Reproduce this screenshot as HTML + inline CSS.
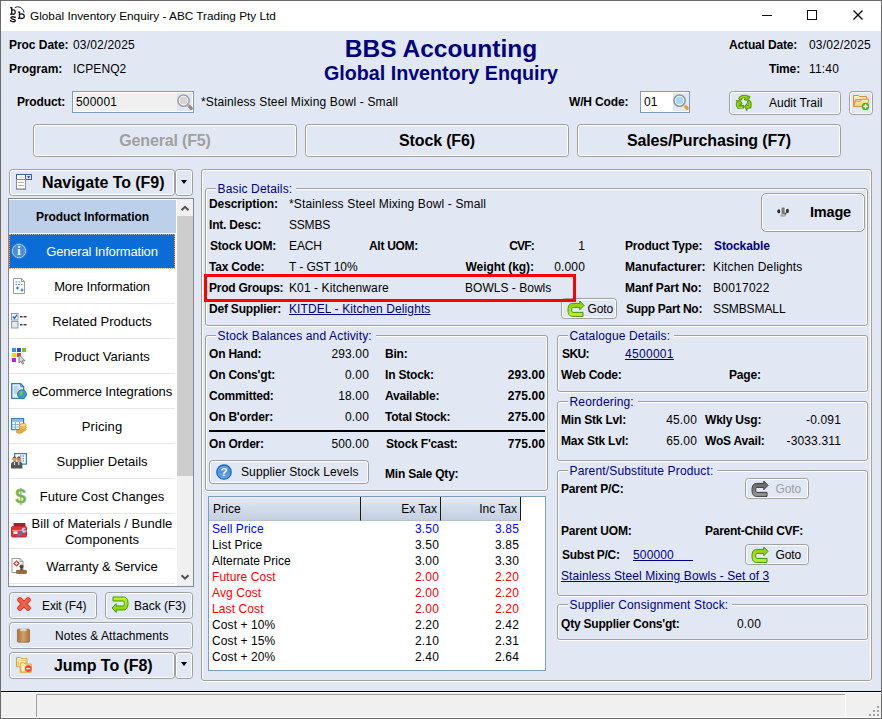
<!DOCTYPE html>
<html><head><meta charset="utf-8"><title>Global Inventory Enquiry</title>
<style>
*{box-sizing:border-box;margin:0;padding:0}
html,body{width:882px;height:719px;overflow:hidden;background:#e1e8f3}
body{font-family:"Liberation Sans",sans-serif;font-size:12px;color:#000;position:relative}
.a{position:absolute;white-space:nowrap;line-height:14px}
.b{font-weight:bold}
.r{text-align:right}
.c{text-align:center}
.navy{color:#000080}
.lnk{color:#000080;text-decoration:underline}
.btn{position:absolute;border:1px solid #a0a0a0;border-radius:3.500px;background:#e1e8f3;box-shadow:inset 0 0 0 1px #fdfdfe}
.grp{position:absolute;border:1px solid #a0a0a0;border-radius:3px;box-shadow:inset 1px 1px 0 #fff,inset -1px 0 0 #fff,0 1px 0 #fff}
.grp>span{position:absolute;top:-7px;left:10px;background:#e1e8f3;padding:0 4px 0 1.500px;color:#000080;font-size:12px;line-height:14px;white-space:nowrap;letter-spacing:.15px}
.li{position:absolute;left:0;width:166px;height:35px;border-bottom:1px solid #e6e6e6;background:#fff;text-align:center;font-size:13px;line-height:36px;white-space:nowrap;padding-left:20px}
svg{position:absolute;overflow:visible}
</style></head><body>
<div class="a" style="left:1px;top:1px;width:880px;height:30px;background:#fff"></div>
<svg width="0" height="0" style="left:0;top:0"><defs><linearGradient id="gg" x1="0" y1="0" x2="0" y2="1"><stop offset="0" stop-color="#c4ee36"/><stop offset="1" stop-color="#86cc00"/></linearGradient><linearGradient id="gy" x1="0" y1="0" x2="0" y2="1"><stop offset="0" stop-color="#fff6cc"/><stop offset="1" stop-color="#f3c95e"/></linearGradient><linearGradient id="gd" x1="0" y1="0" x2="0" y2="1"><stop offset="0" stop-color="#9a9a9a"/><stop offset="1" stop-color="#5e5e5e"/></linearGradient><linearGradient id="gb" x1="0" y1="0" x2="0" y2="1"><stop offset="0" stop-color="#3b80d4"/><stop offset="1" stop-color="#6aa8e8"/></linearGradient><linearGradient id="gc" x1="0" y1="0" x2="1" y2="0"><stop offset="0" stop-color="#a8733c"/><stop offset=".5" stop-color="#cf9f66"/><stop offset="1" stop-color="#a8733c"/></linearGradient></defs></svg>
<svg style="left:0px;top:0px" width="30" height="26" viewBox="0 0 30 26"><g fill="none" stroke="#1c1c1c" stroke-width="1.400" stroke-linecap="butt"><path d="M10.200 7.600h1.500v6.600M10.200 14.200h1.500M11.700 10.600c1.300-1.300 3.500-.9 3.500 1.400s-2.200 2.900-3.500 1.500"/><path d="M15.100 16.500v1.500M15 17.900c-.5-1.500-4-1.700-4.100 0-.1 1.700 4.400 .9 4.400 2.700 0 1.700-4 1.600-4.600-.2M10.700 19.900v1.700"/><path d="M18 12.100h1.500v6.300M18 18.300h1.500M19.500 14.700c1.400-1.400 4.800-1 4.800 1.500s-3.400 2.900-4.800 1.500"/><path d="M14.800 7.700c3.300-2.200 8.200-.3 9.300 4.900" stroke-width="1"/></g></svg>
<div class="a " style="left:30px;top:8px;letter-spacing:0px;font-size:11.8px;line-height:16px;color:#000">Global Inventory Enquiry - ABC Trading Pty Ltd</div>
<svg style="left:760px;top:9px" width="110" height="14" viewBox="0 0 110 14"><g fill="none" stroke="#111" stroke-width="1"><path d="M2 6.500h10"/><rect x="47.500" y="1.500" width="9" height="9"/><path d="M93.500 1.500l9 9M102.500 1.500l-9 9" stroke-width="1.250" stroke="#000"/></g></svg>
<div class="a b" style="left:9px;top:38px;letter-spacing:-0.05px;">Proc Date:</div>
<div class="a " style="left:73px;top:38px;letter-spacing:0.18px;">03/02/2025</div>
<div class="a b" style="left:9px;top:62px;letter-spacing:0px;">Program:</div>
<div class="a " style="left:73px;top:62px;letter-spacing:0.1px;">ICPENQ2</div>
<div class="a b navy c" style="left:241px;width:400px;top:35px;font-size:24.500px;line-height:28px">BBS Accounting</div>
<div class="a b navy c" style="left:241px;width:400px;top:61px;font-size:19.700px;line-height:24px">Global Inventory Enquiry</div>
<div class="a b" style="left:729px;top:38px;letter-spacing:-0.15px;">Actual Date:</div>
<div class="a " style="left:809px;top:38px;letter-spacing:0.18px;">03/02/2025</div>
<div class="a r b" style="left:700px;width:100px;top:62px;letter-spacing:-0.15px;">Time:</div>
<div class="a " style="left:809px;top:62px;letter-spacing:0.18px;">11:40</div>
<div class="a b" style="left:17px;top:95px;letter-spacing:-0.15px;">Product:</div>
<div class="a" style="left:72px;top:91px;width:122px;height:22px;border:1px solid #7f9db9;background:#f0f0f0;box-shadow:inset 0 0 0 1px #fff"></div>
<div class="a" style="left:177px;top:93px;width:15px;height:18px;background:#dfe7f3"></div>
<svg style="left:177px;top:93px" width="16" height="18" viewBox="0 0 16 18"><path d="M11.200 12.300l3 3" stroke="#b8b8b8" stroke-width="3.200" stroke-linecap="round"/><path d="M12.800 13.900l1.400 1.400" stroke="#8e8e8e" stroke-width="3.200" stroke-linecap="round"/><circle cx="6.500" cy="7.600" r="5.600" fill="#fff" stroke="#a2a2a2" stroke-width="1.600"/><circle cx="6.500" cy="7.600" r="4" fill="#d4d4d4"/></svg>
<div class="a " style="left:76px;top:95px;letter-spacing:0.2px;">500001</div>
<div class="a " style="left:201px;top:95px;letter-spacing:0.14px;">*Stainless Steel Mixing Bowl - Small</div>
<div class="a b" style="left:569px;top:95px;letter-spacing:-0.15px;">W/H Code:</div>
<div class="a" style="left:640px;top:91px;width:50px;height:22px;border:1px solid #7f9db9;background:#fff"></div>
<div class="a" style="left:673px;top:93px;width:16px;height:18px;background:#e1e8f3"></div>
<svg style="left:673px;top:93px" width="16" height="18" viewBox="0 0 16 18"><path d="M11.200 12.300l3 3" stroke="#d9dde2" stroke-width="3.200" stroke-linecap="round"/><path d="M12.800 13.900l1.400 1.400" stroke="#eb9f1e" stroke-width="3.200" stroke-linecap="round"/><circle cx="6.500" cy="7.600" r="5.600" fill="#fff" stroke="#979797" stroke-width="1.600"/><circle cx="6.500" cy="7.600" r="4" fill="#a4d8f6"/></svg>
<div class="a " style="left:644px;top:95px;letter-spacing:0.2px;">01</div>
<div class="btn" style="left:729px;top:91px;width:112px;height:24px;"></div>
<svg style="left:735.5px;top:94.5px" width="16" height="16" viewBox="0 0 16 16"><polygon points="2.700,4 3.600,1.800 6.100,.4 10.500,.4 10.800,.7 13.900,1.400 13.900,2 12.300,4.700 11.900,5.100 8.700,5.100 8.300,4 9.400,3.100 7.900,2.500 6.100,3.100 5.800,4.700 5,5.100" fill="#86c400" stroke="#3f8f00" stroke-width=".9" stroke-linejoin="round"/><polygon points="0.160,5.600 4.680,5.780 5.040,7.230 6.130,8.310 5.760,9.210 4.680,9.030 3.230,10.480 7.930,10.480 7.930,13 3.230,13.200 1.790,13.370 0.340,10.480 0.340,7.590 0.890,6.500" fill="#86c400" stroke="#3f8f00" stroke-width=".9" stroke-linejoin="round"/><polygon points="11.550,6.140 13.350,5.060 14.980,6.860 15.160,10.480 14.800,13 11.190,13.190 10.820,15.720 9.200,12.290 9.020,11.560 10.640,8.670 11,10.480 13.720,10.120 13.900,9.400 12.270,9.030 11.370,7.590" fill="#86c400" stroke="#3f8f00" stroke-width=".9" stroke-linejoin="round"/><path d="M4.500 3c1.500-1.600 4.500-1.800 6.500-.8M1.800 8v3.500l1 1h3.500M13.500 7.500l.3 3.500-1 .8h-2.300" fill="none" stroke="#b4e828" stroke-width="1" opacity=".85"/></svg>
<div class="a " style="left:769px;top:96px;letter-spacing:0px;">Audit Trail</div>
<div class="btn" style="left:849px;top:91px;width:24px;height:24px;"></div>
<svg style="left:853px;top:95px" width="17" height="16" viewBox="0 0 17 16"><path d="M.5 .5h5l.8 1h7.200l.5 3h-11.500l-2 7z" fill="url(#gy)" stroke="#d8933a" stroke-width="1" stroke-linejoin="round"/><path d="M2.500 6.200h5l1.600-2h6.500v1.600l-1.700 5.800h-13.400z" fill="url(#gy)" stroke="#d8933a" stroke-width="1" stroke-linejoin="round"/><circle cx="12.500" cy="11.400" r="3.600" fill="#3fa510"/><circle cx="12.500" cy="11.400" r="3.100" fill="#5cbc22"/><path d="M10.400 11.400h4.200M12.500 9.300v4.200" stroke="#fff" stroke-width="1.400"/></svg>
<div class="btn" style="left:33px;top:124px;width:264px;height:33px;"></div>
<div class="a b c" style="left:33px;top:132px;width:264px;font-size:16px;line-height:18px;color:#a0a0a0;letter-spacing:-.15px">General (F5)</div>
<div class="btn" style="left:305px;top:124px;width:264px;height:33px;"></div>
<div class="a b c" style="left:305px;top:132px;width:264px;font-size:16px;line-height:18px;color:#000;letter-spacing:-.15px">Stock (F6)</div>
<div class="btn" style="left:577px;top:124px;width:264px;height:33px;"></div>
<div class="a b c" style="left:577px;top:132px;width:264px;font-size:16px;line-height:18px;color:#000;letter-spacing:-.15px">Sales/Purchasing (F7)</div>
<div class="btn" style="left:9px;top:169px;width:166px;height:27px;"></div>
<svg style="left:16px;top:174px" width="16" height="16" viewBox="0 0 16 16"><rect x=".5" y=".5" width="15" height="5" fill="#fff" stroke="#3d5f91" stroke-width="1"/><path d="M9.500 .5v5" stroke="#3d5f91" stroke-width="1"/><rect x="10" y="1" width="5" height="4" fill="#dbe9f8"/><path d="M10.800 2.200h3.600l-1.800 2z" fill="#1d3f78"/><path d="M2.500 3h5" stroke="#e0e0e0" stroke-width="1.400"/><rect x=".5" y="5.500" width="9" height="9.500" fill="#fff" stroke="#8f8f8f" stroke-width="1"/><path d="M.3 15.300h9.600" stroke="#8a8a8a" stroke-width="1"/><path d="M2.200 8.500h5.600M2.200 11.500h5.600" stroke="#b0b0b0" stroke-width="1"/></svg>
<div class="a b" style="left:42px;top:174px;letter-spacing:-0.05px;font-size:16px;line-height:18px">Navigate To (F9)</div>
<div class="btn" style="left:175px;top:169px;width:18px;height:27px;"></div>
<div class="a" style="left:180.5px;top:180px;width:0px;height:0px;border:3.500px solid transparent;border-top:4px solid #000;border-bottom:0"></div>
<div class="a" id="list" style="left:8px;top:198px;width:186px;height:389px;border:1px solid #828790;background:#fff;overflow:hidden">
 <div class="a" style="left:0;top:1px;width:167px;height:33px;background:#bdd0e9"></div>
 <div class="a b c" style="left:0;top:11px;width:167px;font-size:12px;line-height:15px;letter-spacing:-.1px">Product Information</div>
 <div class="li" style="top:35px;background:#0a6cd6;color:#fff;outline:1px dotted #e0a878;outline-offset:-1px;letter-spacing:-0.18px">General Information</div>
 <svg style="left:2px;top:44px" width="16" height="16" viewBox="0 0 16 16"><circle cx="8" cy="8" r="6.800" fill="#4a8fdc" stroke="#b4d0f0" stroke-width="1"/><circle cx="8" cy="8" r="7.700" fill="none" stroke="#4a86c8" stroke-width=".5"/><text x="8" y="12.300" text-anchor="middle" style="font-family:'Liberation Serif',serif;font-weight:bold;font-size:12px" fill="#fff">i</text></svg>
 <div class="li" style="top:70px;letter-spacing:-0.16px">More Information</div>
 <svg style="left:2px;top:79px" width="16" height="16" viewBox="0 0 16 16"><path d="M2.500 .5h8l3 3v12h-11z" fill="#fff" stroke="#9a9a9a" stroke-width="1"/><path d="M10.500 .5v3h3" fill="none" stroke="#9a9a9a" stroke-width="1"/><path d="M4.500 4h2M7.500 4h1.500M4.500 6.500h1.500M7 6.500h2M10 6.500h1.500" stroke="#5b88c8" stroke-width="1"/><path d="M5 10h3M6.500 8.500v3M9.500 12h3M11 10.500v3" stroke="#2f6fd0" stroke-width="1.200"/></svg>
 <div class="li" style="top:105px;letter-spacing:0px">Related Products</div>
 <svg style="left:2px;top:114px" width="16" height="16" viewBox="0 0 16 16"><rect x=".5" y=".5" width="6.500" height="6.500" fill="#f2f6fb" stroke="#8e9aa8" stroke-width="1"/><path d="M1.800 3.600l1.600 1.700 2.500-3.400" fill="none" stroke="#2a62c8" stroke-width="1.400"/><rect x=".5" y="8.500" width="6.500" height="6.500" fill="#e4e9f0" stroke="#8e9aa8" stroke-width="1"/><path d="M9 3.800h2.600M12.600 3.800h3M9 11.800h2.600M12.600 11.800h3" stroke="#444" stroke-width="1.500"/></svg>
 <div class="li" style="top:140px;letter-spacing:0.03px">Product Variants</div>
 <svg style="left:2px;top:149px" width="16" height="16" viewBox="0 0 16 16"><rect x="1" y="0" width="4" height="4" fill="#3b8be8"/><rect x="6" y="0" width="4" height="4" fill="#2c44d8"/><rect x="11" y="0" width="4" height="4" fill="#7cc21e"/><rect x="1" y="5" width="4" height="4" fill="#f2d21c"/><rect x="6" y="5" width="4" height="4" fill="#e43a24"/><rect x="1" y="10" width="4" height="4" fill="#b822d8"/><path d="M8 6.500v8.500l2-1.800 1.500 3 1.300-.6-1.500-2.900h2.700z" fill="#d8d8d8" stroke="#666" stroke-width=".8"/></svg>
 <div class="li" style="top:175px;letter-spacing:-0.1px">eCommerce Integrations</div>
 <svg style="left:2px;top:184px" width="16" height="16" viewBox="0 0 16 16"><path d="M.7 .7h9l3 3v11.600h-12z" fill="#e8f2fb" stroke="#2f7fc0" stroke-width="1.300"/><path d="M9.700 .7v3h3" fill="none" stroke="#2f7fc0" stroke-width="1"/><rect x="2.500" y="3" width="5" height="8" fill="#b8d6f0"/><circle cx="11" cy="11.300" r="4.500" fill="#3a9ad8" stroke="#1f6fb0" stroke-width=".8"/><path d="M8 10c1-2 3-2.500 4.500-1.500 0 1.500-1 2-1.500 3.500s-1.500 1.500-2 0z" fill="#6fc83a"/></svg>
 <div class="li" style="top:210px;letter-spacing:0.1px">Pricing</div>
 <svg style="left:2px;top:219px" width="16" height="16" viewBox="0 0 16 16"><rect x=".6" y=".6" width="12" height="11" fill="#fff" stroke="#2f7fc0" stroke-width="1.200"/><rect x="1.200" y="1.200" width="10.800" height="2.600" fill="#7fb4e6"/><path d="M1 6.500h11M1 9h11M4.500 4v7.500M8.500 4v7.500" stroke="#7fb4e6" stroke-width="1"/><ellipse cx="8.500" cy="13.500" rx="3.300" ry="1.800" fill="#f3b23a" stroke="#d08c1a" stroke-width=".7"/><ellipse cx="12" cy="11.500" rx="3.300" ry="1.800" fill="#f6c04e" stroke="#d08c1a" stroke-width=".7"/><ellipse cx="12" cy="9.300" rx="3.300" ry="1.800" fill="#f9cf6a" stroke="#d08c1a" stroke-width=".7"/><ellipse cx="12" cy="7.200" rx="3.300" ry="1.800" fill="#fbdc8a" stroke="#d08c1a" stroke-width=".7"/></svg>
 <div class="li" style="top:245px;letter-spacing:0px">Supplier Details</div>
 <svg style="left:2px;top:254px" width="16" height="16" viewBox="0 0 16 16"><rect x="3.600" y=".6" width="11.800" height="10.500" fill="#fff" stroke="#2f7fc0" stroke-width="1.200"/><path d="M9 3h1.500M11.500 3h1.500M9 5.500h1.500M11.500 5.500h1.500M9 8h1.500M11.500 8h1.500" stroke="#5b9be0" stroke-width="1.300"/><circle cx="3.500" cy="6" r="2.300" fill="#d89a62"/><circle cx="7.800" cy="6" r="2.300" fill="#c98a52"/><path d="M2 4.800c.5-1.800 2.600-1.800 3.100 0zM6.300 4.800c.5-1.800 2.600-1.800 3.100 0z" fill="#5a3a20"/><path d="M0 15.500v-4c0-2 1.600-3 3.500-3s2.200.6 2.200.6.500-.6 2.200-.6 3.500 1 3.500 3v4z" fill="#555"/><path d="M3.500 9v3M7.800 9v3" stroke="#e8e8e8" stroke-width="1.100"/></svg>
 <div class="li" style="top:280px;letter-spacing:0.05px">Future Cost Changes</div>
 <svg style="left:2px;top:289px" width="16" height="17" viewBox="0 0 16 17"><text x="9.800" y="15.300" text-anchor="middle" style="font-family:'Liberation Sans',sans-serif;font-weight:bold;font-size:19.500px" fill="#76ad4c" stroke="#9ccb78" stroke-width=".5">$</text></svg>
 <div class="li" style="top:315px;line-height:16px;padding-top:2px;letter-spacing:.05px">Bill of Materials / Bundle<br>Components</div>
 <svg style="left:2px;top:324px" width="16" height="15" viewBox="0 0 16 15"><rect x="2.500" y="0" width="12" height="3" rx=".8" fill="#8e2a2a"/><rect x=".5" y="3.500" width="15" height="10.500" rx="1.200" fill="#e23238" stroke="#b41e24" stroke-width=".9"/><path d="M1 7.500h14" stroke="#f58a8e" stroke-width="1"/><rect x="2.500" y="8.500" width="4" height="2.500" fill="#fff"/><path d="M7.500 12.500l4.500-4.500" stroke="#3a7fd0" stroke-width="2.200" stroke-linecap="round"/><path d="M10.600 6.200c.6-1.600 2.800-2 4-.9l-1.800 1.400.6 1.300 2.100-.4c-.2 1.800-2.200 2.600-3.700 1.800z" fill="#c9d6e6" stroke="#8a9ab0" stroke-width=".5"/></svg>
 <div class="li" style="top:350px;letter-spacing:0px">Warranty &amp; Service</div>
 <svg style="left:2px;top:359px" width="16" height="16" viewBox="0 0 16 16"><path d="M1 .5h8l3 3v11h-11z" fill="#fff" stroke="#9a9a9a" stroke-width="1"/><path d="M9 .5v3h3" fill="none" stroke="#9a9a9a" stroke-width="1"/><path d="M5.500 3l2.500 2.500-2.500 2.500-2.500-2.500z" fill="#fff" stroke="#e03a30" stroke-width="1.200"/><circle cx="10.500" cy="8.500" r="2" fill="#5a4030"/><path d="M9.500 10h2l.5 2.500h-3z" fill="#6a4a36"/><rect x="5.500" y="12.300" width="10" height="3.200" rx=".6" fill="#9a6a3a" stroke="#6e4a26" stroke-width=".6"/></svg>
 <div class="a" style="left:168px;top:0;width:16px;height:387px;background:#f0f0f0"></div>
 <div class="a" style="left:168px;top:17px;width:16px;height:260px;background:#cdcdcd"></div>
 <svg style="left:168px;top:1px" width="16" height="17"><path d="M4.500 10.300l3.500-3.500 3.500 3.500" fill="none" stroke="#505050" stroke-width="2"/></svg>
 <svg style="left:168px;top:370px" width="16" height="17"><path d="M4.500 6.200l3.500 3.500 3.500-3.500" fill="none" stroke="#505050" stroke-width="2"/></svg>
</div>
<div class="btn" style="left:9px;top:592px;width:88px;height:27px;"></div>
<svg style="left:17px;top:597px" width="14" height="14" viewBox="0 0 14 14"><path d="M2.900 2.900l8.200 8.200M11.100 2.900l-8.200 8.200" stroke="#dc3a22" stroke-width="5.400" stroke-linecap="round"/><path d="M2.900 2.900l8.200 8.200M11.100 2.900l-8.200 8.200" stroke="#f0614c" stroke-width="3.400" stroke-linecap="round"/></svg>
<div class="a " style="left:42px;top:599px;letter-spacing:-0.1px;">Exit (F4)</div>
<div class="btn" style="left:105px;top:592px;width:88px;height:27px;"></div>
<svg style="left:112px;top:596px" width="17" height="18" viewBox="0 0 17 18"><path d="M1 1H11.500C14.500 1 16 3.500 16 7.500C16 11.500 14.500 14 11.500 14H4.200V16.400L0 12L4.200 7.700V10H11C12 10 12.300 9 12.300 7.500C12.300 6 12 5 11 5H1Z" fill="url(#gg)" stroke="#3f9a00" stroke-width="1" stroke-linejoin="round"/></svg>
<div class="a " style="left:134px;top:599px;letter-spacing:0px;">Back (F3)</div>
<div class="btn" style="left:9px;top:622px;width:184px;height:27px;"></div>
<svg style="left:17px;top:627.5px" width="13" height="15" viewBox="0 0 13 15"><rect x=".4" y="1.200" width="12.200" height="13" rx="1" fill="url(#gc)" stroke="#a06c36" stroke-width=".8"/><path d="M3.400 1.200v1.600h5.800v-1.600" fill="#e6ecf4" stroke="#c9ccd2" stroke-width=".6"/><path d="M4.600 .5h3.600" stroke="#d0d4da" stroke-width="1"/></svg>
<div class="a " style="left:55px;top:629px;letter-spacing:0.08px;">Notes &amp; Attachments</div>
<div class="btn" style="left:9px;top:652px;width:166px;height:27px;"></div>
<svg style="left:16px;top:657px" width="17" height="17" viewBox="0 0 17 17"><path d="M.5 .5h4l.8 1.200h5.700v8h-10.500z" fill="url(#gy)" stroke="#e0a030" stroke-width="1" stroke-linejoin="round"/><path d="M2.500 3.500h7v6h-7z" fill="#fff6cc" stroke="#e8b858" stroke-width=".6"/><path d="M4.200 5.800h4l.8 1.200h6.200v8.200h-11z" fill="url(#gy)" stroke="#e0a030" stroke-width="1" stroke-linejoin="round"/><path d="M6 9h2.500v5.500h-2.500z" fill="#fff6cc"/><circle cx="12.300" cy="11.600" r="3.300" fill="#e83a28"/><circle cx="12.300" cy="11.600" r="3.300" fill="none" stroke="#f26a5a" stroke-width=".6"/><path d="M10.300 11.600h4" stroke="#fff" stroke-width="1.500"/></svg>
<div class="a b" style="left:54px;top:657px;letter-spacing:-0.05px;font-size:16px;line-height:18px">Jump To (F8)</div>
<div class="btn" style="left:175px;top:652px;width:18px;height:27px;"></div>
<div class="a" style="left:180.5px;top:662px;width:0px;height:0px;border:3.500px solid transparent;border-top:4px solid #000;border-bottom:0"></div>
<div class="grp" style="left:201px;top:169px;width:671px;height:512px;border-radius:3px"></div>
<div class="grp" style="left:205px;top:188px;width:663px;height:138px;"><span>Basic Details:</span></div>
<div class="a b" style="left:209px;top:197px;letter-spacing:-0.1px;">Description:</div>
<div class="a " style="left:289px;top:197px;letter-spacing:0.14px;">*Stainless Steel Mixing Bowl - Small</div>
<div class="a b" style="left:209px;top:218px;letter-spacing:-0.2px;">Int. Desc:</div>
<div class="a " style="left:289px;top:218px;letter-spacing:-0.2px;">SSMBS</div>
<div class="a b" style="left:210px;top:239px;letter-spacing:-0.2px;">Stock UOM:</div>
<div class="a " style="left:289px;top:239px;letter-spacing:-0.1px;">EACH</div>
<div class="a b" style="left:369px;top:239px;letter-spacing:-0.3px;">Alt UOM:</div>
<div class="a r b" style="left:434px;width:100px;top:239px;letter-spacing:-0.8px;">CVF:</div>
<div class="a r " style="left:485px;width:100px;top:239px;">1</div>
<div class="a b" style="left:625px;top:239px;letter-spacing:-0.2px;">Product Type:</div>
<div class="a b navy" style="left:714px;top:239px;letter-spacing:-0.1px;">Stockable</div>
<div class="a b" style="left:209px;top:260px;letter-spacing:-0.2px;">Tax Code:</div>
<div class="a " style="left:289px;top:260px;letter-spacing:-0.1px;">T - GST 10%</div>
<div class="a r b" style="left:434px;width:100px;top:260px;letter-spacing:-0.05px;">Weight (kg):</div>
<div class="a r " style="left:485px;width:100px;top:260px;letter-spacing:0.15px;">0.000</div>
<div class="a b" style="left:625px;top:260px;letter-spacing:0.05px;">Manufacturer:</div>
<div class="a " style="left:713px;top:260px;letter-spacing:0.17px;">Kitchen Delights</div>
<div class="a b" style="left:209px;top:281px;letter-spacing:-0.25px;">Prod Groups:</div>
<div class="a " style="left:289px;top:281px;letter-spacing:0.1px;">K01 - Kitchenware</div>
<div class="a " style="left:465px;top:281px;letter-spacing:0.02px;">BOWLS - Bowls</div>
<div class="a b" style="left:625px;top:281px;letter-spacing:-0.1px;">Manf Part No:</div>
<div class="a " style="left:713px;top:281px;letter-spacing:0.25px;">B0017022</div>
<div class="a b" style="left:209px;top:302px;letter-spacing:-0.2px;">Def Supplier:</div>
<div class="a lnk" style="left:289px;top:302px;letter-spacing:0.1px;">KITDEL - Kitchen Delights</div>
<div class="a b" style="left:626px;top:302px;letter-spacing:-0.3px;">Supp Part No:</div>
<div class="a " style="left:713px;top:302px;letter-spacing:-0.1px;">SSMBSMALL</div>
<div class="a" style="left:204px;top:274px;width:372px;height:28px;border:3px solid #ff0000;z-index:5"></div>
<div class="btn" style="left:761px;top:193px;width:104px;height:39px;border-radius:5px"></div>
<svg style="left:776.5px;top:206.5px" width="13" height="11" viewBox="0 0 13 11"><ellipse cx="6.200" cy="4.800" rx="5" ry="4.300" fill="#f4f6f9"/><ellipse cx="2" cy="4.300" rx="1.700" ry="2.100" fill="#2a2a2a"/><ellipse cx="10.300" cy="4" rx="1.700" ry="2.200" fill="#3a3a3a"/><rect x="4.400" y=".4" width="3.400" height="6.800" rx="1.200" fill="#777"/><path d="M3.700 2v4M8.300 1.500v4" stroke="#fff" stroke-width=".9"/><ellipse cx="6" cy="8.300" rx="3.200" ry="1.600" fill="#b4b4b4"/><ellipse cx="8.400" cy="6.600" rx="1.100" ry="1.200" fill="#5a5a5a"/></svg>
<div class="a b" style="left:810px;top:204px;letter-spacing:-0.2px;font-size:14.500px;line-height:17px">Image</div>
<div class="btn" style="left:561px;top:298px;width:56px;height:21px;"></div>
<svg style="left:568px;top:300px" width="17" height="18" viewBox="0 0 17 18"><path d="M1 1H11.500C14.500 1 16 3.500 16 7.500C16 11.500 14.500 14 11.500 14H4.200V16.400L0 12L4.200 7.700V10H11C12 10 12.300 9 12.300 7.500C12.300 6 12 5 11 5H1Z" transform="rotate(180 8 8.700)" fill="url(#gg)" stroke="#3f9a00" stroke-width="1" stroke-linejoin="round"/></svg>
<div class="a " style="left:587.5px;top:302px;letter-spacing:-0.15px;">Goto</div>
<div class="grp" style="left:205px;top:335px;width:343px;height:156px;"><span>Stock Balances and Activity:</span></div>
<div class="a b" style="left:209px;top:347px;letter-spacing:-0.2px;">On Hand:</div>
<div class="a r " style="left:269px;width:100px;top:347px;letter-spacing:0.15px;">293.00</div>
<div class="a b" style="left:385px;top:347px;letter-spacing:-0.2px;">Bin:</div>
<div class="a b" style="left:209px;top:368px;letter-spacing:-0.2px;">On Cons'gt:</div>
<div class="a r " style="left:269px;width:100px;top:368px;letter-spacing:0.15px;">0.00</div>
<div class="a b" style="left:385px;top:368px;letter-spacing:-0.2px;">In Stock:</div>
<div class="a r b" style="left:445px;width:100px;top:368px;letter-spacing:0.1px;">293.00</div>
<div class="a b" style="left:209px;top:389px;letter-spacing:-0.2px;">Committed:</div>
<div class="a r " style="left:269px;width:100px;top:389px;letter-spacing:0.15px;">18.00</div>
<div class="a b" style="left:385px;top:389px;letter-spacing:-0.2px;">Available:</div>
<div class="a r b" style="left:445px;width:100px;top:389px;letter-spacing:0.1px;">275.00</div>
<div class="a b" style="left:209px;top:410px;letter-spacing:-0.2px;">On B'order:</div>
<div class="a r " style="left:269px;width:100px;top:410px;letter-spacing:0.15px;">0.00</div>
<div class="a b" style="left:385px;top:410px;letter-spacing:-0.2px;">Total Stock:</div>
<div class="a r b" style="left:445px;width:100px;top:410px;letter-spacing:0.1px;">275.00</div>
<div class="a b" style="left:209px;top:437px;letter-spacing:-0.2px;">On Order:</div>
<div class="a r " style="left:269px;width:100px;top:437px;letter-spacing:0.15px;">500.00</div>
<div class="a b" style="left:386px;top:437px;letter-spacing:-0.2px;">Stock F'cast:</div>
<div class="a r b" style="left:445px;width:100px;top:437px;letter-spacing:0.1px;">775.00</div>
<div class="a" style="left:209px;top:430px;width:336px;height:2px;background:#000"></div>
<div class="btn" style="left:209px;top:460px;width:160px;height:24px;"></div>
<svg style="left:215.5px;top:463.5px" width="16" height="16" viewBox="0 0 16 16"><circle cx="8" cy="8" r="7.200" fill="url(#gb)" stroke="#1c66c2" stroke-width="1.300"/><path d="M2.800 5.500c1.500-3.500 8.500-3.500 10.400 0" fill="none" stroke="#8fc0f0" stroke-width=".8"/><text x="8.100" y="12.200" text-anchor="middle" style="font-family:'Liberation Sans',sans-serif;font-weight:bold;font-size:11.500px" fill="#fff">?</text></svg>
<div class="a " style="left:241px;top:465px;letter-spacing:0.1px;">Supplier Stock Levels</div>
<div class="a b" style="left:385px;top:467px;letter-spacing:-0.2px;">Min Sale Qty:</div>
<div class="a" style="left:208px;top:496px;width:338px;height:175px;border:1px solid #7f9db9;background:#fff"></div>
<div class="a" style="left:209px;top:497px;width:152px;height:24px;background:linear-gradient(#e6ebf3,#d3dcea 45%,#c4cfe0);border-right:1px solid #1a1a1a;border-bottom:1px solid #b5c0d0"></div>
<div class="a" style="left:361px;top:497px;width:80px;height:24px;background:linear-gradient(#e6ebf3,#d3dcea 45%,#c4cfe0);border-right:1px solid #1a1a1a;border-bottom:1px solid #b5c0d0"></div>
<div class="a" style="left:441px;top:497px;width:80px;height:24px;background:linear-gradient(#e6ebf3,#d3dcea 45%,#c4cfe0);border-right:1px solid #1a1a1a;border-bottom:1px solid #b5c0d0"></div>
<div class="a " style="left:213px;top:502px;letter-spacing:0.1px;">Price</div>
<div class="a r " style="left:337px;width:100px;top:502px;letter-spacing:0px;">Ex Tax</div>
<div class="a r " style="left:417px;width:100px;top:502px;letter-spacing:0px;">Inc Tax</div>
<div class="a " style="left:212px;top:522px;letter-spacing:0.1px;color:#0000ff">Sell Price</div>
<div class="a r " style="left:339px;width:100px;top:522px;letter-spacing:0.15px;color:#0000ff">3.50</div>
<div class="a r " style="left:419px;width:100px;top:522px;letter-spacing:0.15px;color:#0000ff">3.85</div>
<div class="a " style="left:212px;top:538px;letter-spacing:0.1px;color:#000">List Price</div>
<div class="a r " style="left:339px;width:100px;top:538px;letter-spacing:0.15px;color:#000">3.50</div>
<div class="a r " style="left:419px;width:100px;top:538px;letter-spacing:0.15px;color:#000">3.85</div>
<div class="a " style="left:212px;top:554px;letter-spacing:0px;color:#000">Alternate Price</div>
<div class="a r " style="left:339px;width:100px;top:554px;letter-spacing:0.15px;color:#000">3.00</div>
<div class="a r " style="left:419px;width:100px;top:554px;letter-spacing:0.15px;color:#000">3.30</div>
<div class="a " style="left:212px;top:570px;letter-spacing:0.1px;color:#ff0000">Future Cost</div>
<div class="a r " style="left:339px;width:100px;top:570px;letter-spacing:0.15px;color:#ff0000">2.00</div>
<div class="a r " style="left:419px;width:100px;top:570px;letter-spacing:0.15px;color:#ff0000">2.20</div>
<div class="a " style="left:212px;top:586px;letter-spacing:0.1px;color:#ff0000">Avg Cost</div>
<div class="a r " style="left:339px;width:100px;top:586px;letter-spacing:0.15px;color:#ff0000">2.00</div>
<div class="a r " style="left:419px;width:100px;top:586px;letter-spacing:0.15px;color:#ff0000">2.20</div>
<div class="a " style="left:212px;top:602px;letter-spacing:0.1px;color:#ff0000">Last Cost</div>
<div class="a r " style="left:339px;width:100px;top:602px;letter-spacing:0.15px;color:#ff0000">2.00</div>
<div class="a r " style="left:419px;width:100px;top:602px;letter-spacing:0.15px;color:#ff0000">2.20</div>
<div class="a " style="left:212px;top:618px;letter-spacing:0.1px;color:#000">Cost + 10%</div>
<div class="a r " style="left:339px;width:100px;top:618px;letter-spacing:0.15px;color:#000">2.20</div>
<div class="a r " style="left:419px;width:100px;top:618px;letter-spacing:0.15px;color:#000">2.42</div>
<div class="a " style="left:212px;top:634px;letter-spacing:0.1px;color:#000">Cost + 15%</div>
<div class="a r " style="left:339px;width:100px;top:634px;letter-spacing:0.15px;color:#000">2.10</div>
<div class="a r " style="left:419px;width:100px;top:634px;letter-spacing:0.15px;color:#000">2.31</div>
<div class="a " style="left:212px;top:650px;letter-spacing:0.1px;color:#000">Cost + 20%</div>
<div class="a r " style="left:339px;width:100px;top:650px;letter-spacing:0.15px;color:#000">2.40</div>
<div class="a r " style="left:419px;width:100px;top:650px;letter-spacing:0.15px;color:#000">2.64</div>
<div class="grp" style="left:557px;top:335px;width:311px;height:57px;"><span>Catalogue Details:</span></div>
<div class="a b" style="left:562px;top:347px;letter-spacing:-0.6px;">SKU:</div>
<div class="a lnk" style="left:625px;top:347px;letter-spacing:0.3px;">4500001</div>
<div class="a b" style="left:561px;top:368px;letter-spacing:-0.2px;">Web Code:</div>
<div class="a b" style="left:729px;top:368px;letter-spacing:-0.2px;">Page:</div>
<div class="grp" style="left:557px;top:401px;width:311px;height:60px;"><span>Reordering:</span></div>
<div class="a b" style="left:561px;top:413px;letter-spacing:-0.2px;">Min Stk Lvl:</div>
<div class="a r " style="left:597px;width:100px;top:413px;letter-spacing:0.15px;">45.00</div>
<div class="a b" style="left:705px;top:413px;letter-spacing:-0.2px;">Wkly Usg:</div>
<div class="a r " style="left:741px;width:100px;top:413px;letter-spacing:0.15px;">-0.091</div>
<div class="a b" style="left:561px;top:434px;letter-spacing:-0.2px;">Max Stk Lvl:</div>
<div class="a r " style="left:597px;width:100px;top:434px;letter-spacing:0.15px;">65.00</div>
<div class="a b" style="left:705px;top:434px;letter-spacing:-0.2px;">WoS Avail:</div>
<div class="a r " style="left:741px;width:100px;top:434px;letter-spacing:0.15px;">-3033.311</div>
<div class="grp" style="left:557px;top:470px;width:311px;height:126px;"><span>Parent/Substitute Product:</span></div>
<div class="a b" style="left:561px;top:482px;letter-spacing:-0.2px;">Parent P/C:</div>
<div class="btn" style="left:745px;top:478px;width:64px;height:21px;"></div>
<svg style="left:752px;top:480px" width="17" height="18" viewBox="0 0 17 18"><path d="M1 1H11.500C14.500 1 16 3.500 16 7.500C16 11.500 14.500 14 11.500 14H4.200V16.400L0 12L4.200 7.700V10H11C12 10 12.300 9 12.300 7.500C12.300 6 12 5 11 5H1Z" transform="rotate(180 8 8.700)" fill="url(#gd)" stroke="#3a3a3a" stroke-width="1" stroke-linejoin="round"/></svg>
<div class="a " style="left:775.5px;top:482px;letter-spacing:-0.15px;color:#a0a0a0">Goto</div>
<div class="a b" style="left:561px;top:524px;letter-spacing:-0.2px;">Parent UOM:</div>
<div class="a b" style="left:705px;top:524px;letter-spacing:-0.27px;">Parent-Child CVF:</div>
<div class="a b" style="left:562px;top:548px;letter-spacing:-0.3px;">Subst P/C:</div>
<div class="a lnk" style="left:633px;top:548px;letter-spacing:0.15px;white-space:pre;word-spacing:-.3px">500000      </div>
<div class="btn" style="left:745px;top:544px;width:64px;height:21px;"></div>
<svg style="left:752px;top:546px" width="17" height="18" viewBox="0 0 17 18"><path d="M1 1H11.500C14.500 1 16 3.500 16 7.500C16 11.500 14.500 14 11.500 14H4.200V16.400L0 12L4.200 7.700V10H11C12 10 12.300 9 12.300 7.500C12.300 6 12 5 11 5H1Z" transform="rotate(180 8 8.700)" fill="url(#gg)" stroke="#3f9a00" stroke-width="1" stroke-linejoin="round"/></svg>
<div class="a " style="left:775.5px;top:548px;letter-spacing:-0.15px;">Goto</div>
<div class="a lnk" style="left:561px;top:569px;letter-spacing:0.09px;">Stainless Steel Mixing Bowls - Set of 3</div>
<div class="grp" style="left:557px;top:604px;width:311px;height:36px;"><span>Supplier Consignment Stock:</span></div>
<div class="a b" style="left:561px;top:617px;letter-spacing:-0.2px;">Qty Supplier Cons'gt:</div>
<div class="a " style="left:737px;top:617px;letter-spacing:0.15px;">0.00</div>
<div class="a" style="left:1px;top:691px;width:880px;height:1px;background:#000"></div>
<div class="a" style="left:1px;top:692px;width:880px;height:1px;background:#fff"></div>
<div class="a" style="left:1px;top:693px;width:880px;height:24px;background:#f0f0f0"></div>
<div class="a" style="left:1px;top:717px;width:880px;height:1px;background:#fff"></div>
<div class="a" style="left:36px;top:694px;width:809px;height:23px;border-left:1px solid #a0a0a0;border-top:1px solid #a0a0a0"></div>
<div class="a" style="left:845px;top:694px;width:1px;height:23px;background:#fff"></div>
<svg style="left:868px;top:705px" width="12" height="12"><g fill="#a3a3a3"><rect x="9" y="1" width="2" height="2"/><rect x="5" y="5" width="2" height="2"/><rect x="9" y="5" width="2" height="2"/><rect x="1" y="9" width="2" height="2"/><rect x="5" y="9" width="2" height="2"/><rect x="9" y="9" width="2" height="2"/></g></svg>
<div class="a" style="left:0px;top:0px;width:882px;height:719px;border:1px solid #6a6a6a;pointer-events:none"></div>
</body></html>
